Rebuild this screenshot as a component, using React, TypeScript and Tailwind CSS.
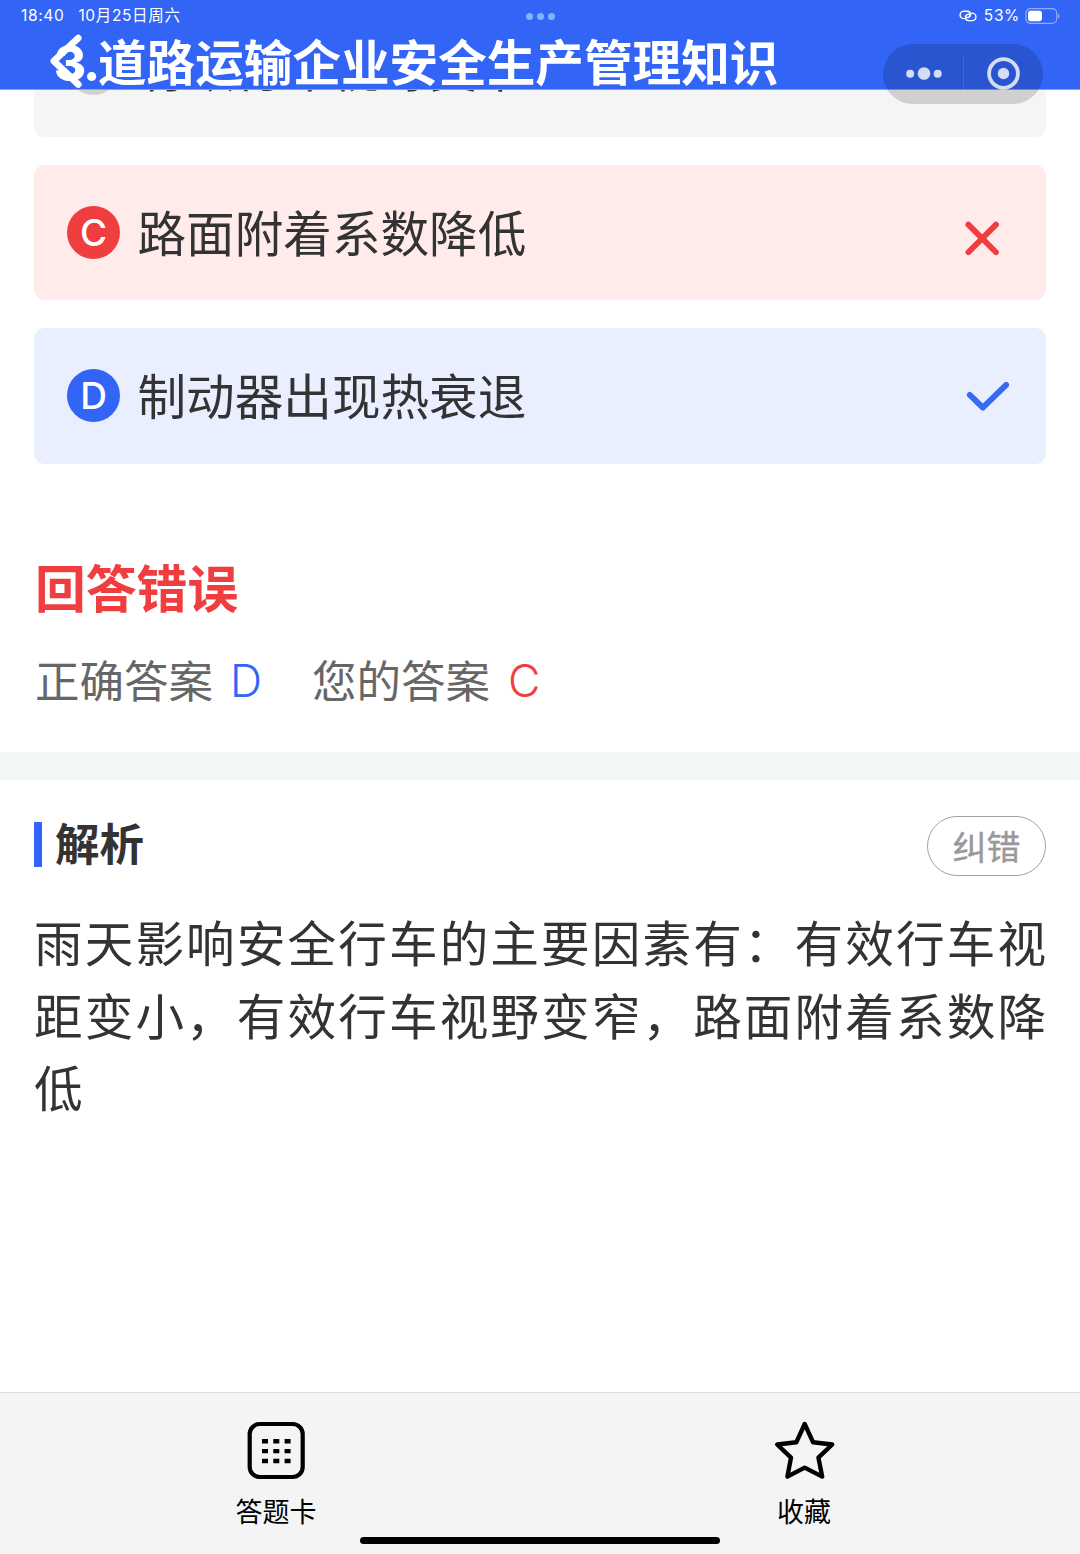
import React from 'react'

type OptionStatus = 'idle' | 'wrong' | 'right'

interface Option {
  key: string
  text: string
  status: OptionStatus
}

const options: Option[] = [
  { key: 'B', text: '有效行车视野变窄', status: 'idle' },
  { key: 'C', text: '路面附着系数降低', status: 'wrong' },
  { key: 'D', text: '制动器出现热衰退', status: 'right' },
]

const rowColors = {
  idle: 'bg-[#f5f5f5]',
  wrong: 'bg-[#feebea]',
  right: 'bg-[#e9effe]',
}

const badgeColors = {
  idle: 'bg-[#d3d1d3]',
  wrong: 'bg-[#f03e40]',
  right: 'bg-[#3264f6]',
}

const StatusBar: React.FC = () => (
  <div className="flex h-8 items-center justify-between pl-[21px] pr-[20px] text-[15.5px] leading-none tracking-[0.65px] text-white">
    <div className="flex w-[300px] gap-[14px]">
      <span>18:40</span>
      <span>10月25日周六</span>
    </div>
    <div className="flex gap-[3.6px]">
      <span className="size-[7px] rounded-full bg-[#7fb5ff]" />
      <span className="size-[7px] rounded-full bg-[#7fb5ff]" />
      <span className="size-[7px] rounded-full bg-[#7fb5ff]" />
    </div>
    <div className="flex w-[300px] items-center justify-end">
      <svg width="18" height="12" viewBox="0 0 18 12" fill="none" stroke="white" strokeWidth="1.4" strokeLinecap="round">
        <path d="M5.2 8.6A3.7 3.7 0 0 1 4.4 1.2H8.6A3.2 3.2 0 0 1 9.4 7.4Q7.6 7.8 6.6 6.6" />
        <path d="M12.8 3.2A3.7 3.7 0 0 1 13.6 10.6H9.4A3.2 3.2 0 0 1 8.6 4.4Q10.4 4 11.4 5.2" />
      </svg>
      <span className="ml-[7px]">53%</span>
      <svg className="ml-[5px]" width="35" height="16" viewBox="0 0 35 16" fill="none">
        <rect x="0.9" y="0.7" width="30.8" height="14.6" rx="4.5" stroke="#8facfa" strokeWidth="1.2" />
        <rect x="3" y="2.8" width="14" height="10.4" rx="2.4" fill="white" />
        <path d="M33 5.2Q36 8 33 10.8Z" fill="#8facfa" />
      </svg>
    </div>
  </div>
)

const Capsule: React.FC = () => (
  <div className="absolute left-[883px] top-[44px] z-20 h-[60px] w-[160px] rounded-full bg-black/15">
    <svg width="160" height="60" viewBox="0 0 160 60" fill="none">
      <g fill="white" fillOpacity="0.8">
        <circle cx="27.2" cy="29.8" r="4" />
        <circle cx="41" cy="29.5" r="6.3" />
        <circle cx="54.7" cy="29.8" r="4" />
        <circle cx="120.5" cy="29.5" r="5.7" />
      </g>
      <circle cx="120.5" cy="29.5" r="14.4" stroke="white" strokeOpacity="0.8" strokeWidth="3.8" />
      <path d="M80.5 12V48" stroke="white" strokeOpacity="0.1" />
    </svg>
  </div>
)

const StatusIcon: React.FC<{ status: OptionStatus }> = ({ status }) => {
  if (status === 'wrong') {
    return (
      <svg className="mr-[46px] mt-3" width="36" height="36" viewBox="0 0 36 36" fill="none" stroke="#f03e40" strokeWidth="5.8" strokeLinecap="round">
        <path d="M4.4 4.6L32 32.2M32 4.6L4.4 32.2" />
      </svg>
    )
  }
  if (status === 'right') {
    return (
      <svg className="mr-[36px]" width="44" height="32" viewBox="0 0 44 32" fill="none" stroke="#3769f5" strokeWidth="5.8" strokeLinecap="round" strokeLinejoin="round">
        <path d="M3.8 14.9L16.8 27.6L40.2 4.8" />
      </svg>
    )
  }
  return null
}

const App: React.FC = () => {
  return (
    <div className="relative flex h-[1554px] w-[1080px] flex-col overflow-hidden bg-white font-[Inter,'Noto_Sans_CJK_SC',sans-serif] text-[#333333]">
      {/* Header */}
      <header className="absolute inset-x-0 top-0 z-10 box-content h-[89px] border-b border-[#7f9ffa] bg-[#3264f6]">
        <StatusBar />
        <h1 className="absolute left-[54px] top-[28px] flex items-baseline whitespace-nowrap text-[48.6px] font-bold leading-[72px] text-white">
          <span className="w-[44px] text-[49px] font-extrabold tracking-[-2.2px]">3.</span>
          <span>道路运输企业安全生产管理知识</span>
        </h1>
        <svg className="absolute left-[48px] top-[33px]" width="36" height="56" viewBox="0 0 36 56" fill="none" stroke="white" strokeWidth="6.6" strokeLinecap="round" strokeLinejoin="round">
          <path d="M30.3 5L5.8 28L30.3 51.5" />
        </svg>
      </header>
      <Capsule />

      {/* Options */}
      <section className="flex flex-col gap-[28px] px-[34px] pt-[1.2px]">
        {options.map((option) => (
          <div key={option.key} className={`flex h-[135.5px] items-center rounded-[11px] pl-[33px] ${rowColors[option.status]}`}>
            <span className={`flex size-[53px] items-center justify-center rounded-full text-[37px] font-medium leading-none text-white ${badgeColors[option.status]}`}>
              {option.key}
            </span>
            <span className={`ml-[17.5px] flex-1 text-[48.6px] leading-[72px] ${option.status === 'idle' ? 'pt-[2px]' : 'pt-[5px]'}`}>{option.text}</span>
            <StatusIcon status={option.status} />
          </div>
        ))}
      </section>

      {/* Result */}
      <section className="h-[288.5px] px-[35px] pt-[88px]">
        <h2 className="text-[50.8px] font-bold leading-[76px] text-[#f03e40]">回答错误</h2>
        <p className="mt-[21px] flex text-[44.5px] leading-[66px] text-[#666666]">
          <span>正确答案</span>
          <span className="-mt-px ml-[17px] w-[82px] font-[350] text-[#3264f6]">D</span>
          <span>您的答案</span>
          <span className="-mt-px ml-[18px] font-[350] text-[#f03e40]">C</span>
        </p>
      </section>

      <div className="h-[28px] bg-[#f3f7f8]" />

      {/* Analysis */}
      <section className="flex-1 px-[34px] pt-[36px]">
        <div className="flex h-[60px] items-center justify-between">
          <div className="flex items-center gap-[13px]">
            <span className="mt-[-4px] h-[45px] w-[8px] bg-[#3264f6]" />
            <h3 className="mt-[-2px] text-[44.5px] font-bold leading-[60px]">解析</h3>
          </div>
          <button className="h-[60px] w-[119px] rounded-full border-[1.5px] border-[#a0a0a0] pt-[3px] text-[34px] leading-none text-[#999999] [-webkit-text-stroke:0.4px_#999999]">纠错</button>
        </div>
        <p className="mt-[33px] text-justify text-[48.6px] leading-[72.5px]">
          雨天影响安全行车的主要因素有：有效行车视距变小，有效行车视野变窄，路面附着系数降低
        </p>
      </section>

      {/* Bottom bar */}
      <footer className="relative flex h-[162px] border-t border-[#dddddd] bg-[#f4f4f4] px-[12px] pt-[28px] text-[27px] leading-[40px] text-black">
        <div className="flex w-[528px] flex-col items-center gap-[12px]">
          <svg width="60" height="60" viewBox="0 0 60 60" fill="none">
            <rect x="3.7" y="3" width="53" height="53" rx="10" stroke="black" strokeWidth="4.2" />
            <path d="M16 20.2H22M27.3 20.2H33.3M38.6 20.2H44.6M16 30.1H22M27.3 30.1H33.3M38.6 30.1H44.6M16 40H22M27.3 40H33.3M38.6 40H44.6" stroke="black" strokeWidth="4.4" />
          </svg>
          <span>答题卡</span>
        </div>
        <div className="flex w-[528px] flex-col items-center gap-[12px]">
          <svg width="62" height="60" viewBox="0 0 62 60" fill="none" stroke="black" strokeWidth="4.4" strokeLinejoin="round">
            <path d="M31.7 3L40 21.2L59.2 23.5L45.4 36.6L49.2 55.6L31.7 46.6L14.4 55.6L18 36.6L4.2 23.5L23.4 21.2Z" />
          </svg>
          <span>收藏</span>
        </div>
        <div className="absolute left-[360px] top-[144px] h-[7px] w-[360px] rounded-full bg-black" />
      </footer>
    </div>
  )
}

export default App
